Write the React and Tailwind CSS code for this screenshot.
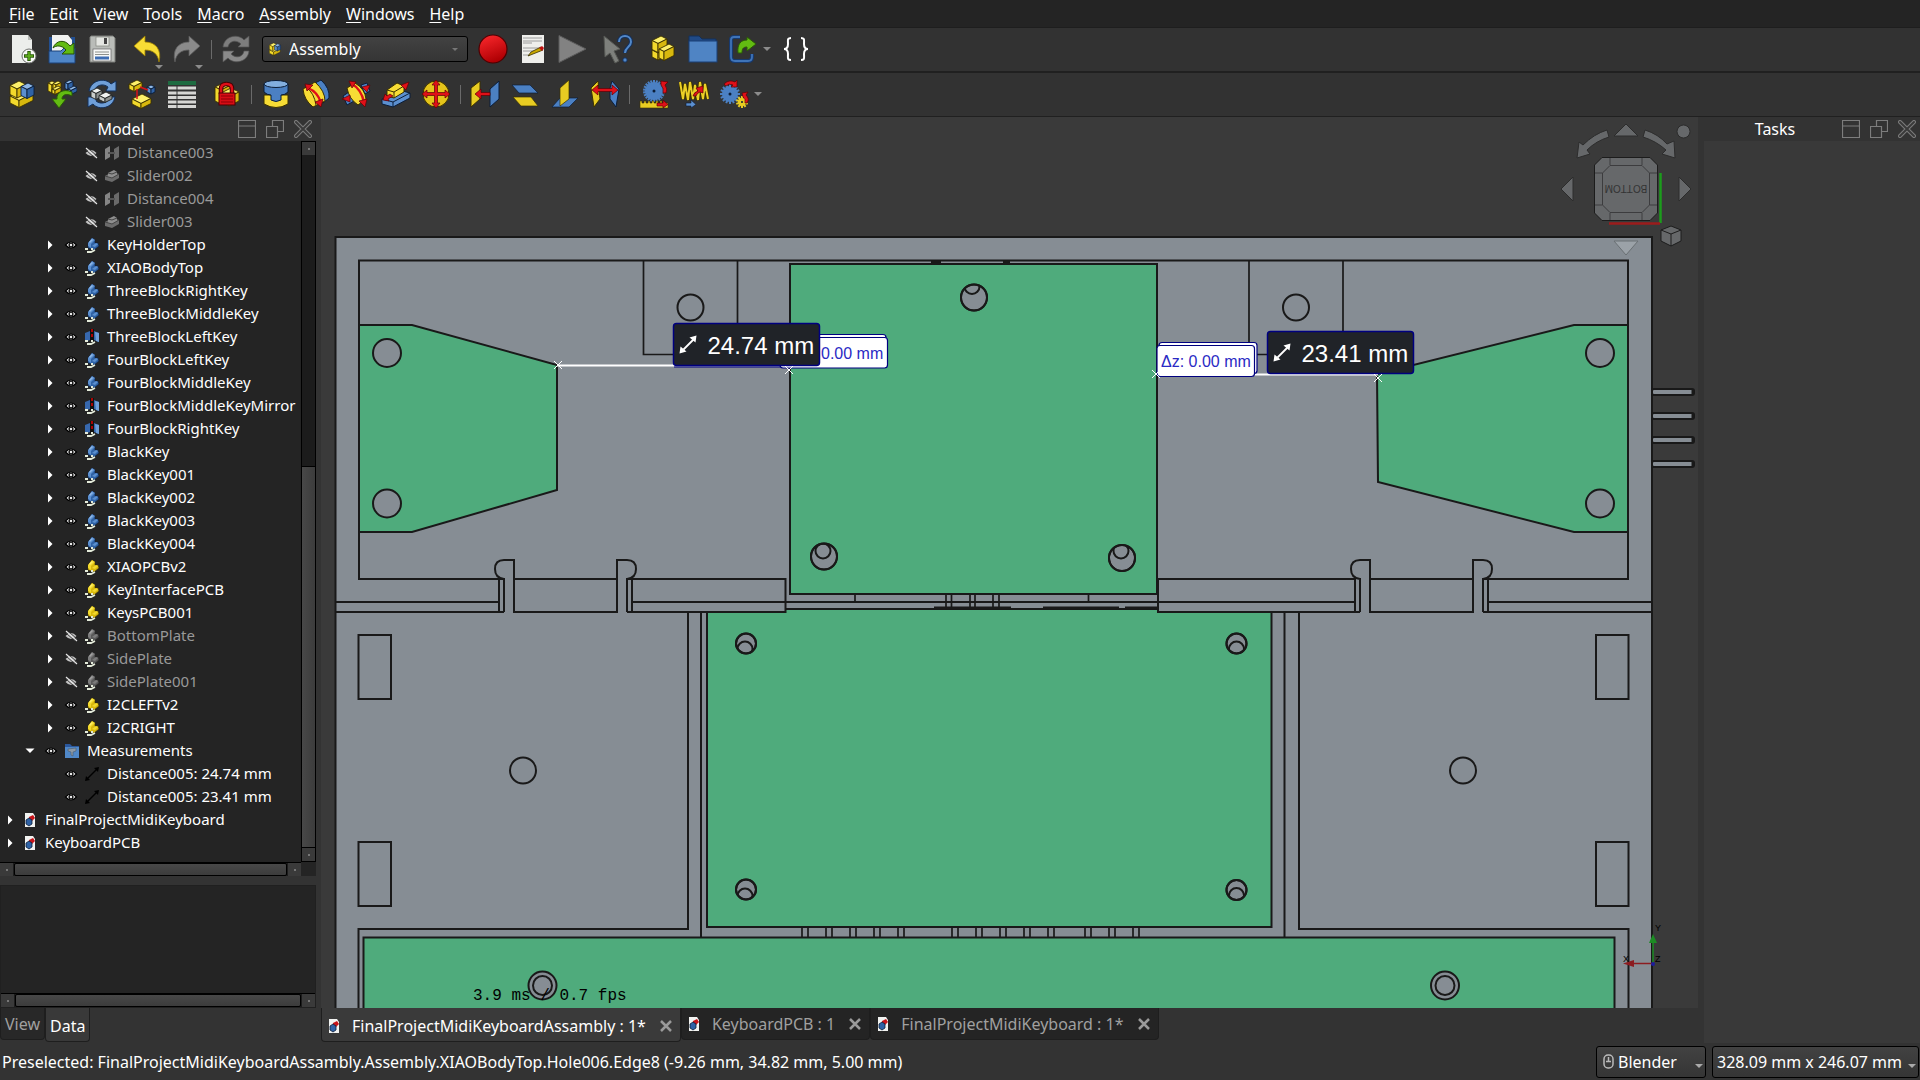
import React, { useState } from 'react';

/* ---------- icon helpers ---------- */

const YELLOW = { top: '#fdf06a', left: '#f2d92c', right: '#d8b80e', edge: '#3a3000' };
const BLUE = { top: '#8fb8e6', left: '#5b8fcf', right: '#2f62a5', edge: '#0b1d38' };
const GRAY = { top: '#a2a2a2', left: '#7c7c7c', right: '#5a5a5a', edge: '#2a2a2a' };
const SILVER = { top: '#f1f3f1', left: '#c9cdca', right: '#8d918f', edge: '#202424' };

// small isometric block, x/y is the top corner of the upper face
function Block({ x, y, a = 6, b = 6, h = 6, c = YELLOW }) {
  const A = [x - a, y + a / 2];
  const B = [x + b, y + b / 2];
  const C = [x + b - a, y + (a + b) / 2];
  return (
    <g stroke={c.edge} strokeWidth="0.9" strokeLinejoin="round">
      <path d={`M${x} ${y}L${B}L${C}L${A}Z`} fill={c.top} />
      <path d={`M${A}L${C}V${C[1] + h}L${A[0]} ${A[1] + h}Z`} fill={c.left} />
      <path d={`M${C}L${B}V${B[1] + h}L${C[0]} ${C[1] + h}Z`} fill={c.right} />
    </g>
  );
}

function Icon({ children, size = 30 }) {
  return (
    <svg viewBox={`0 0 ${size} ${size}`} width={size} height={size} className="shrink-0" aria-hidden="true">
      {children}
    </svg>
  );
}

function Gear({ x, y, r, n, fill, hole = 1 }) {
  const teeth = [];
  for (let i = 0; i < n; i++) {
    teeth.push(<rect key={i} x={x - 1} y={y - r - 2} width="2" height="4" fill={fill} transform={`rotate(${(360 / n) * i} ${x} ${y})`} />);
  }
  return (
    <g>
      {teeth}
      <circle cx={x} cy={y} r={r} fill={fill} />
      <circle cx={x} cy={y} r={hole} fill="#0b1d38" />
    </g>
  );
}

const red = { fill: '#e01018', stroke: '#5c0006', strokeWidth: 0.7, strokeLinejoin: 'round' };

const icons = {
  fresh: (
    <Icon>
      <path d="M5 1H21L25 6V29H5Z" fill="#eceeeb" />
      <path d="M21 1L25 6H21Z" fill="#b9bcb8" />
      <circle cx="22" cy="22" r="7" fill="#f7f7f7" stroke="#6d706c" />
      <path d="M22 17V27M17 22H27" stroke="#2c5c0c" strokeWidth="3.4" />
      <path d="M22 18V26M18 22H26" stroke="#62b41c" strokeWidth="1.6" />
    </Icon>
  ),
  open: (
    <Icon>
      <path d="M2 3H6V20H24V3H28V29H2Z" fill="#234f90" />
      <path d="M5 1H21L25 6V20H5Z" fill="#f2f3f1" />
      <path d="M2 17H14L17 14H28V29H2Z" fill="#4f86c8" stroke="#1b4179" />
      <path d="M6 14C9 6 18 5 23 12L27 9V20H15L19 16C15 11 9 11 6 14Z" fill="#62bb12" stroke="#245005" />
    </Icon>
  ),
  save: (
    <Icon>
      <path d="M4 2H26L28 4V28H3V3Z" fill="#b9bcb8" stroke="#7c7f7b" />
      <rect x="9" y="3" width="13" height="9" fill="#e4e6e2" stroke="#85877f" strokeWidth="0.7" />
      <rect x="17" y="4" width="3" height="6" fill="#444" />
      <rect x="6" y="15" width="18" height="12" fill="#f7f8f6" stroke="#666" strokeWidth="0.7" />
      <path d="M8 18H22M8 20.500H22" stroke="#8d908c" />
      <path d="M8 24H22" stroke="#3f6fb4" strokeWidth="3" />
    </Icon>
  ),
  undo: (
    <Icon>
      <path d="M2 12L13 2V8C24 8 30 16 27 28C26 20 21 16 13 16V22Z" fill="#f7dc35" stroke="#9a7d00" strokeWidth="0.8" strokeLinejoin="round" />
    </Icon>
  ),
  redo: (
    <Icon>
      <path d="M28 12L17 2V8C6 8 0 16 3 28C4 20 9 16 17 16V22Z" fill="#8a8a8a" stroke="#5a5a5a" strokeWidth="0.8" strokeLinejoin="round" />
    </Icon>
  ),
  refresh: (
    <Icon>
      <path d="M2 13C3 2 17 -1 23 6L28 2V13H17L20 10C15 5 8 7 7 13Z" fill="#7d7d7d" stroke="#555" strokeWidth="0.7" />
      <path d="M28 17C27 28 13 31 7 24L2 28V17H13L10 20C15 25 22 23 23 17Z" fill="#8a8a8a" stroke="#555" strokeWidth="0.7" />
    </Icon>
  ),
  record: (
    <Icon>
      <linearGradient id="rec" x1="0" y1="0" x2="0.4" y2="1">
        <stop offset="0" stopColor="#ff2a2e" />
        <stop offset="1" stopColor="#b00004" />
      </linearGradient>
      <circle cx="15" cy="15" r="14" fill="url(#rec)" stroke="#4d0002" strokeWidth="1.2" />
    </Icon>
  ),
  macroEdit: (
    <Icon>
      <rect x="4" y="1" width="22" height="28" fill="#efefec" />
      <path d="M5 4H24M5 7H24M5 9H14M5 14H24M5 17H22M5 21H12" stroke="#9c9c9c" />
      <path d="M10 22L13 18L23 13L25 16L15 20Z" fill="#c9a800" stroke="#3a3000" strokeWidth="0.8" />
      <path d="M21 14L24 12L26 14L24 17Z" fill="#c01010" />
    </Icon>
  ),
  play: (
    <Icon>
      <path d="M1 1.500L28 15L1 28.500Z" fill="#828282" stroke="#5c5c5c" />
    </Icon>
  ),
  whats: (
    <Icon>
      <path d="M1 2L2 23L7 19L12 29L16 27L11 17L17 15Z" fill="#7e807c" stroke="#565854" />
      <path d="M16 8C16 0 28 0 28 8C28 13 22 13 22 19" fill="none" stroke="#14305c" strokeWidth="4" />
      <path d="M16 8C16 0 28 0 28 8C28 13 22 13 22 19" fill="none" stroke="#5288c8" strokeWidth="2" />
      <circle cx="22" cy="26" r="2.200" fill="#5288c8" stroke="#14305c" />
    </Icon>
  ),
  part: (
    <Icon>
      <Block x={12} y={12} a={8} b={6} h={7} />
      <Block x={13} y={2} a={9} b={6} h={9} />
      <Block x={21} y={10} a={10} b={5} h={9} />
    </Icon>
  ),
  folder: (
    <Icon>
      <path d="M1 2H11L14 5H28V10H1Z" fill="#204a87" stroke="#12305c" />
      <rect x="1" y="7" width="28" height="21" fill="#4f84c4" stroke="#1a3f75" />
    </Icon>
  ),
  link: (
    <Icon>
      <path d="M12 3H6Q3 3 3 6V23Q3 27 7 27H20Q24 27 24 23V20" fill="none" stroke="#173a70" strokeWidth="4" />
      <path d="M12 3H6Q3 3 3 6V23Q3 27 7 27H20Q24 27 24 23V20" fill="none" stroke="#3f74b8" strokeWidth="1.800" />
      <path d="M10 19C9 10 13 6 19 6V3L28 10L19 17V13C15 13 14 15 14 19Z" fill="#62bb12" stroke="#2b5a06" />
    </Icon>
  ),
  braces: (
    <Icon>
      <path d="M10 4C6 4 7 6 7 10C7 13 6 15 3 15C6 15 7 17 7 20C7 24 6 26 10 26" fill="none" stroke="#fff" strokeWidth="2" />
      <path d="M20 4C24 4 23 6 23 10C23 13 24 15 27 15C24 15 23 17 23 20C23 24 24 26 20 26" fill="none" stroke="#fff" strokeWidth="2" />
    </Icon>
  ),
  assembly: (
    <Icon>
      <Block x={17} y={10} a={14} b={9} h={7} />
      <Block x={12} y={2} a={9} b={7} h={9} />
      <Block x={21} y={4} a={7} b={6} h={9} c={BLUE} />
    </Icon>
  ),
  insert: (
    <Icon>
      <Block x={5} y={2} a={4} b={4} h={8} />
      <Block x={11} y={2} a={5} b={3} h={5} />
      <Block x={11} y={7} a={6} b={3} h={4} />
      <Block x={23} y={1} a={5} b={3} h={6} c={BLUE} />
      <Block x={27} y={7} a={6} b={3} h={4} c={BLUE} />
      <path d="M25 13C16 9 9 14 10 20H5L12 29L19 20H15C15 16 19 14 25 17Z" fill="#62bb12" stroke="#2b5a06" />
    </Icon>
  ),
  solve: (
    <Icon>
      <path d="M2 12C4 1 18 -2 24 5L29 2V12H19L21 8C16 4 9 6 7 12Z" fill="#6f9fd8" stroke="#12305c" />
      <path d="M28 18C26 29 12 32 6 25L1 28V18H11L9 22C14 26 21 24 23 18Z" fill="#6f9fd8" stroke="#12305c" />
      <Block x={10} y={9} a={6} b={5} h={6} c={SILVER} />
      <Block x={19} y={13} a={7} b={6} h={4} c={SILVER} />
    </Icon>
  ),
  explode: (
    <Icon>
      <Block x={10} y={1} a={8} b={5} h={5} />
      <Block x={24} y={6} a={4} b={4} h={5} c={BLUE} />
      <Block x={15} y={15} a={10} b={9} h={5} />
      <path d="M13 8L21 11M10 10V20" stroke="#d8141a" strokeWidth="1.500" />
    </Icon>
  ),
  bom: (
    <Icon>
      <rect x="1" y="2" width="28" height="4" fill="#1e6b41" />
      <path d="M1 9H29M1 14H29M1 18.500H29M1 23H29M1 27.500H29" stroke="#d6d6d4" strokeWidth="3" />
      <path d="M10 7V29" stroke="#333" />
    </Icon>
  ),
  lock: (
    <Icon>
      <Block x={13} y={3} a={10} b={6} h={14} />
      <Block x={19} y={9} a={10} b={8} h={9} />
      <path d="M9 15V10Q9 5 14.500 5Q20 5 20 10V15" fill="none" stroke="#4a0004" strokeWidth="4.500" />
      <path d="M9 15V10Q9 5 14.500 5Q20 5 20 10V15" fill="none" stroke="#e01018" strokeWidth="2.500" />
      <rect x="7" y="14" width="16" height="12" fill="#d80d14" stroke="#4a0004" />
      <path d="M9 17H21M9 20H21M9 23H21" stroke="#8d0006" />
    </Icon>
  ),
  fixed: (
    <Icon>
      <path d="M3 16V25Q15 32 27 25V16Z" fill="#f7dc35" stroke="#3a3000" />
      <path d="M3 5V13Q6 16 10 16V21Q15 24 20 21V16Q24 16 27 13V5Z" fill="#4b80c3" stroke="#0b1d38" />
      <ellipse cx="15" cy="5" rx="12" ry="3.500" fill="#82aedf" stroke="#0b1d38" />
    </Icon>
  ),
  revolute: (
    <Icon>
      <path d="M14 4L20 1Q29 9 28 19L22 24Z" fill="#4b80c3" stroke="#0b1d38" />
      <path d="M2 10L14 3Q24 12 24 22L12 28Q3 21 2 10Z" fill="#f7dc35" stroke="#3a3000" />
      <path d="M6 9Q13 14 15 26" fill="none" stroke="#3a3000" />
      <path d="M7 9Q17 13 20 24" fill="none" stroke="#e01018" strokeWidth="2.400" />
      <path d="M4 5L12 6L6 12ZM14 23L22 20L20 28Z" {...red} />
    </Icon>
  ),
  cylindrical: (
    <Icon>
      <path d="M2 17L8 13L13 22L6 26ZM20 6L26 4L29 12L24 15Z" fill="#4b80c3" stroke="#0b1d38" />
      <path d="M6 9L14 4Q24 10 25 20L17 26Q8 20 6 9Z" fill="#f7dc35" stroke="#3a3000" />
      <path d="M11 5Q20 10 23 23" fill="none" stroke="#e01018" strokeWidth="2.400" />
      <path d="M8 2L15 3L11 9ZM18 22L26 20L24 28ZM1 20L9 16V23ZM21 8L29 6L26 13Z" {...red} />
    </Icon>
  ),
  slider: (
    <Icon>
      <path d="M1 20L18 11L29 14V19L12 28L1 25Z" fill="#5b8fcf" stroke="#0b1d38" />
      <path d="M1 20L12 23L29 14M12 23V28" fill="none" stroke="#0b1d38" />
      <path d="M6 11L16 4L23 7V13L13 19L6 17Z" fill="#f7dc35" stroke="#3a3000" />
      <path d="M6 11L13 13L23 7M13 13V19" fill="none" stroke="#3a3000" />
      <path d="M2 21L4 15L6 17L9 15L12 17L7 20L8 22ZM20 6L28 3L25 11Z" {...red} />
    </Icon>
  ),
  ball: (
    <Icon>
      <circle cx="15" cy="15" r="13" fill="#e5c41a" stroke="#3a3000" />
      <path d="M15 1L19 6H16.500V13.500H24V11L29 15L24 19V16.500H16.500V24H19L15 29L11 24H13.500V16.500H6V19L1 15L6 11V13.500H13.500V6H11Z" {...red} />
    </Icon>
  ),
  distance: (
    <Icon>
      <path d="M1 9L10 2V20L1 28Z" fill="#e8cc22" stroke="#3a3000" />
      <path d="M20 10L29 2V20L20 28Z" fill="#4b80c3" stroke="#0b1d38" />
      <path d="M5 15L11 10V13.500H20V16.500H11V20Z" {...red} />
    </Icon>
  ),
  parallel: (
    <Icon>
      <path d="M2 6H20L28 14H9Z" fill="#4b80c3" stroke="#0b1d38" strokeWidth="0.7" />
      <path d="M3 18H21L28 27H11Z" fill="#e8cc22" stroke="#3a3000" strokeWidth="0.7" />
    </Icon>
  ),
  perpendicular: (
    <Icon>
      <path d="M2 28L10 19H28L19 28Z" fill="#4b80c3" stroke="#0b1d38" strokeWidth="0.7" />
      <path d="M10 9L19 1V20L10 27Z" fill="#e8cc22" stroke="#3a3000" strokeWidth="0.7" />
    </Icon>
  ),
  angle: (
    <Icon>
      <path d="M1 9L8 2L10 20L4 28Z" fill="#e8cc22" stroke="#3a3000" />
      <path d="M20 9L22 2L29 10L26 28L20 20Z" fill="#4b80c3" stroke="#0b1d38" />
      <path d="M2 11L8 6V9.500H22V6L28 11L22 16V12.500H8V16Z" {...red} />
    </Icon>
  ),
  rack: (
    <Icon>
      <Gear x={15} y={12} r={9} n={22} fill="#4b80c3" hole={1.5} />
      <path d="M1 29V22H3V24H5V22H7V24H9V22H11V24H13V22H15V24H17V22H19V24H21V22H23V24H29V29Z" fill="#e8cc22" stroke="#3a3000" strokeWidth="0.6" />
      <path d="M18 24H24V21L29 25.500L24 29V27H18ZM22 2L29 3L26 6Q29 10 27 14H24Q25 9 22 6Z" {...red} />
    </Icon>
  ),
  screw: (
    <Icon>
      <path d="M1 3L4 20L6 5L9 21L11 3L14 20L16 6L19 21L21 3L24 20L26 5L29 20" fill="none" stroke="#3a3000" strokeWidth="4" />
      <path d="M1 3L4 20L6 5L9 21L11 3L14 20L16 6L19 21L21 3L24 20L26 5L29 20" fill="none" stroke="#ecd026" strokeWidth="2" />
      <path d="M14 17Q15 13 19 12L17 9L24 7V14L21 13Q18 14 17 17Z" {...red} />
      <path d="M7 24H12V21L17 25.500L12 29V27H7Z" fill="#5b8fcf" stroke="#0b1d38" strokeWidth="0.6" />
    </Icon>
  ),
  gears: (
    <Icon>
      <Gear x={11} y={15} r={8} n={16} fill="#4b80c3" hole={1.5} />
      <Gear x={23} y={23} r={4} n={10} fill="#e8cc22" />
      <path d="M5 5Q10 0 16 3L18 1V8H12L14 6Q10 4 7 7ZM23 14L29 13L27 16Q31 20 28 24H26Q27 20 24 18Z" {...red} />
    </Icon>
  ),
};

/* ---------- tree icons ---------- */

function Eye() {
  return (
    <Icon size={16}>
      <path d="M2.500 8Q8 2 13.500 8Q8 14 2.500 8Z" fill="#f4f4f4" stroke="#000" strokeWidth="1.200" />
      <circle cx="8" cy="8" r="2.600" fill="#111" />
      <circle cx="8" cy="8" r="1.200" fill="#eee" />
    </Icon>
  );
}

function EyeOff() {
  return (
    <Icon size={16}>
      <path d="M2.500 8Q8 2 13.500 8Q8 14 2.500 8Z" fill="#c4c4c4" />
      <path d="M3 5L12 13M6 4L14 11" stroke="#3a3a3a" />
      <path d="M3 3L14 13" stroke="#e6e6e6" strokeWidth="1.200" />
    </Icon>
  );
}

function Arrow({ open }) {
  return (
    <Icon size={16}>
      <path d={open ? 'M3.500 5.500H12.500L8 10Z' : 'M6 3.500L10.500 8L6 12.500Z'} fill="#fff" />
    </Icon>
  );
}

const bodyIcon = (c) => (
  <Icon size={16}>
    <path d="M4 6L8 1L11 3V6L14 6L15 9L10 13L4 11Z" fill={c.right} stroke={c.edge} strokeWidth="0.6" />
    <path d="M4 6L8 1L11 3L7 7V11L4 9Z" fill={c.left} />
    <path d="M8 9L12 6L14 7L11 10Z" fill={c.left} />
    <path d="M5 5L8 2L9 3L6 6Z" fill={c.top} />
    <path d="M1 12L4 12M3 15H7L11 13M7 12H9" stroke="#e3ead9" strokeWidth="1.800" />
  </Icon>
);

const treeIcons = {
  body: bodyIcon(BLUE),
  part: bodyIcon(YELLOW),
  off: bodyIcon(GRAY),
  mirror: (
    <Icon size={16}>
      <path d="M1 4L6 2V11L1 13ZM15 4L10 2V11L15 13Z" fill="#3768ae" />
      <path d="M11 3L15 4V13L12 12Z" fill="#6f9fd8" />
      <rect x="6" y="0" width="4" height="12" fill="#111" />
      <path d="M8 0V10" stroke="#d00" strokeWidth="1.500" strokeDasharray="3 2" />
      <path d="M1 12L4 12M3 15H7L11 13M7 12H9" stroke="#e3ead9" strokeWidth="1.800" />
    </Icon>
  ),
  distance: (
    <Icon size={16}>
      <path d="M1 4L6 1V12L1 15Z" fill="#858585" />
      <path d="M10 4L15 1V12L10 15Z" fill="#6a6a6a" />
      <path d="M4 8H11" stroke="#555" strokeWidth="2" />
    </Icon>
  ),
  slider: (
    <Icon size={16}>
      <path d="M1 8L8 4L15 6V10L8 14L1 12Z" fill="#6c6c6c" />
      <path d="M4 5L10 2L13 4V7L8 10L4 9Z" fill="#8f8f8f" />
      <path d="M1 8L8 10L15 6M4 5L8 6L13 4" fill="none" stroke="#444" />
    </Icon>
  ),
  group: (
    <Icon size={16}>
      <path d="M1 1H6L8 3H15V15H1Z" fill="#2a579c" />
      <rect x="1" y="4" width="14" height="11" fill="#5088c8" />
      <path d="M4 6L12 5V8L9 9V13L7 12V9L4 8Z" fill="#8c99a6" stroke="#4a5a6c" strokeWidth="0.6" />
    </Icon>
  ),
  measure: (
    <Icon size={16}>
      <path d="M3 13L13 3" stroke="#000" strokeWidth="1.500" />
      <path d="M15 1L14 6L10 2ZM1 15L2 10L6 14Z" fill="#000" />
    </Icon>
  ),
  doc: (
    <Icon size={16}>
      <path d="M3 1H11L13 4V15H3Z" fill="#f2f3f1" />
      <path d="M7 5L11 3L13 6L10 9L7 8Z" fill="#c8141a" />
      <path d="M4 8L7 6L10 8V12L7 14L4 12Z" fill="#2f62a5" stroke="#0b1d38" strokeWidth="0.8" />
    </Icon>
  ),
};

const treeRows = [
  { label: 'Distance003', icon: 'distance', depth: 3, hidden: true, leaf: true },
  { label: 'Slider002', icon: 'slider', depth: 3, hidden: true, leaf: true },
  { label: 'Distance004', icon: 'distance', depth: 3, hidden: true, leaf: true },
  { label: 'Slider003', icon: 'slider', depth: 3, hidden: true, leaf: true },
  { label: 'KeyHolderTop', icon: 'body', depth: 2 },
  { label: 'XIAOBodyTop', icon: 'body', depth: 2 },
  { label: 'ThreeBlockRightKey', icon: 'body', depth: 2 },
  { label: 'ThreeBlockMiddleKey', icon: 'body', depth: 2 },
  { label: 'ThreeBlockLeftKey', icon: 'mirror', depth: 2 },
  { label: 'FourBlockLeftKey', icon: 'body', depth: 2 },
  { label: 'FourBlockMiddleKey', icon: 'body', depth: 2 },
  { label: 'FourBlockMiddleKeyMirror', icon: 'mirror', depth: 2 },
  { label: 'FourBlockRightKey', icon: 'mirror', depth: 2 },
  { label: 'BlackKey', icon: 'body', depth: 2 },
  { label: 'BlackKey001', icon: 'body', depth: 2 },
  { label: 'BlackKey002', icon: 'body', depth: 2 },
  { label: 'BlackKey003', icon: 'body', depth: 2 },
  { label: 'BlackKey004', icon: 'body', depth: 2 },
  { label: 'XIAOPCBv2', icon: 'part', depth: 2 },
  { label: 'KeyInterfacePCB', icon: 'part', depth: 2 },
  { label: 'KeysPCB001', icon: 'part', depth: 2 },
  { label: 'BottomPlate', icon: 'off', depth: 2, hidden: true },
  { label: 'SidePlate', icon: 'off', depth: 2, hidden: true },
  { label: 'SidePlate001', icon: 'off', depth: 2, hidden: true },
  { label: 'I2CLEFTv2', icon: 'part', depth: 2 },
  { label: 'I2CRIGHT', icon: 'part', depth: 2 },
  { label: 'Measurements', icon: 'group', depth: 1, open: true },
  { label: 'Distance005: 24.74 mm', icon: 'measure', depth: 2, leaf: true },
  { label: 'Distance005: 23.41 mm', icon: 'measure', depth: 2, leaf: true },
  { label: 'FinalProjectMidiKeyboard', icon: 'doc', depth: 0, doc: true },
  { label: 'KeyboardPCB', icon: 'doc', depth: 0, doc: true },
];

const indent = ['pl-0', 'pl-5', 'pl-10', 'pl-15'];

/* ---------- bars ---------- */

const menus = ['File', 'Edit', 'View', 'Tools', 'Macro', 'Assembly', 'Windows', 'Help'];

function MenuBar() {
  return (
    <nav className="flex h-7 shrink-0 items-center gap-px border-b border-[#1e1e1e] bg-[#242424] pl-0.5">
      {menus.map((m) => (
        <button key={m} className="px-[7px] text-base leading-6">
          <span className="underline underline-offset-2">{m[0]}</span>{m.slice(1)}
        </button>
      ))}
    </nav>
  );
}

function Tool({ name, label, menu }) {
  return (
    <button aria-label={label} className="relative flex h-10 w-10 shrink-0 items-center justify-center">
      {icons[name]}
      {menu && <span className="absolute right-1 bottom-0 border-x-4 border-t-4 border-x-transparent border-t-[#8c8c8c]" />}
    </button>
  );
}

const Sep = () => <span className="mx-1 h-[19px] w-px shrink-0 bg-[#6a6a6a]" />;
const Drop = () => <span className="border-x-4 border-t-4 border-x-transparent border-t-[#8c8c8c]" />;

function Toolbars() {
  return (
    <>
      <div className="flex h-[45px] shrink-0 items-center border-b-2 border-[#202020] bg-[#323232] pb-px pl-0.5">
        <Tool name="fresh" label="New" />
        <Tool name="open" label="Open" />
        <Tool name="save" label="Save" />
        <span className="w-[5px]" />
        <Tool name="undo" label="Undo" menu />
        <Tool name="redo" label="Redo" menu />
        <Sep />
        <Tool name="refresh" label="Refresh" />
        <div className="relative mr-[5px] ml-1.5 flex w-[206px] items-center">
          <span className="pointer-events-none absolute left-1.5">
            <svg viewBox="0 0 30 30" width="14" height="14" aria-hidden="true">{icons.assembly.props.children}</svg>
          </span>
          <select aria-label="Workbench" className="h-[26px] w-full appearance-none rounded-[3px] border border-black bg-linear-to-b from-[#424242] to-[#353535] pl-[26px] text-base leading-6">
            <option>Assembly</option>
          </select>
          <span className="pointer-events-none absolute right-2.5 border-x-3 border-t-3 border-x-transparent border-t-[#777]" />
        </div>
        <Tool name="record" label="Record macro" />
        <Tool name="macroEdit" label="Macros" />
        <Tool name="play" label="Execute macro" />
        <span className="w-[5px]" />
        <Tool name="whats" label="What's this" />
        <span className="w-[5px]" />
        <Tool name="part" label="Create part" />
        <Tool name="folder" label="Create group" />
        <Tool name="link" label="Make link" />
        <Drop />
        <span className="w-[5px]" />
        <Tool name="braces" label="Expression" />
      </div>
      <div className="flex h-11 shrink-0 items-center border-b border-[#202020] bg-[#323232] pb-px pl-0.5">
        <Tool name="assembly" label="New assembly" />
        <Tool name="insert" label="Insert component" />
        <Tool name="solve" label="Solve" />
        <Tool name="explode" label="Exploded view" />
        <Tool name="bom" label="Bill of materials" />
        <span className="w-[5px]" />
        <Tool name="lock" label="Toggle grounded" />
        <Sep />
        <Tool name="fixed" label="Fixed joint" />
        <Tool name="revolute" label="Revolute joint" />
        <Tool name="cylindrical" label="Cylindrical joint" />
        <Tool name="slider" label="Slider joint" />
        <Tool name="ball" label="Ball joint" />
        <Sep />
        <Tool name="distance" label="Distance joint" />
        <Tool name="parallel" label="Parallel joint" />
        <Tool name="perpendicular" label="Perpendicular joint" />
        <Tool name="angle" label="Angle joint" />
        <Sep />
        <Tool name="rack" label="Rack and pinion joint" />
        <Tool name="screw" label="Screw joint" />
        <Tool name="gears" label="Gear joint" />
        <Drop />
      </div>
    </>
  );
}

/* ---------- docks ---------- */

function DockTitle({ title }) {
  const btn = 'flex h-6 w-[26px] items-center justify-center';
  return (
    <div className="flex h-6 shrink-0 items-center gap-0.5">
      <h2 className="flex-1 pl-2.5 text-center text-base leading-6">{title}</h2>
      <button aria-label={`${title} shade`} className={btn}>
        <svg width="18" height="18" viewBox="0 0 18 18" fill="none" stroke="#7d7d7d" strokeWidth="1.200"><path d="M0.500 0.500H17.500V17.500H0.500ZM1 6H17" /></svg>
      </button>
      <button aria-label={`${title} float`} className={btn}>
        <svg width="18" height="18" viewBox="0 0 18 18" fill="none" stroke="#7d7d7d" strokeWidth="1.200"><path d="M6.500 6.500V0.500H17.500V11.500H11.500M0.500 6.500H11.500V17.500H0.500Z" /></svg>
      </button>
      <button aria-label={`${title} close`} className={btn}>
        <svg width="18" height="18" viewBox="0 0 18 18"><path d="M2 2L16 16M16 2L2 16" stroke="#7d7d7d" strokeWidth="4" strokeLinecap="round" /><path d="M2 2L16 16M16 2L2 16" stroke="#3a3a3a" strokeWidth="2" strokeLinecap="round" /></svg>
      </button>
    </div>
  );
}

function ScrollButton() {
  return (
    <span className="flex h-[13px] w-[13px] shrink-0 items-center justify-center bg-[#3a3a3a]">
      <span className="h-0.5 w-0.5 bg-[#777]" />
    </span>
  );
}

function HScroll() {
  return (
    <div className="flex h-3.5 shrink-0 gap-px border-t border-black bg-[#1c1c1c]">
      <ScrollButton />
      <div className="flex-1 rounded-xs border border-black bg-linear-to-b from-[#484848] to-[#3c3c3c]" />
      <ScrollButton />
    </div>
  );
}

function TreeRow({ row }) {
  return (
    <li className={`flex h-[23px] items-center ${indent[row.depth]} ${row.hidden ? 'text-[#999]' : 'text-white'}`}>
      <span className="flex w-5 shrink-0 justify-center">{!row.leaf && <Arrow open={row.open} />}</span>
      {!row.doc && <span className="flex w-[22px] shrink-0 justify-center">{row.hidden ? <EyeOff /> : <Eye />}</span>}
      <span className="flex w-5 shrink-0 justify-center">{treeIcons[row.icon]}</span>
      <span className="ml-[5px] text-[15px] leading-[23px] whitespace-nowrap">{row.label}</span>
    </li>
  );
}

function ModelDock() {
  return (
    <aside className="flex w-[321px] shrink-0 flex-col bg-[#333] pr-[5px]">
      <DockTitle title="Model" />
      <div className="flex min-h-0 flex-1 bg-[#242424]">
        <div className="flex min-w-0 flex-1 flex-col">
          <ul className="min-h-0 flex-1 overflow-hidden">
            {treeRows.map((row, i) => <TreeRow key={i} row={row} />)}
          </ul>
          <HScroll />
        </div>
        <div className="mb-3.5 flex w-[15px] shrink-0 flex-col border border-black bg-[#1c1c1c]">
          <ScrollButton />
          <div className="flex-1" />
          <div className="h-[382px] border-y border-black bg-linear-to-r from-[#484848] to-[#3c3c3c]" />
          <ScrollButton />
        </div>
      </div>
      <div className="mt-[9px] flex h-[123px] shrink-0 flex-col border border-[#202020] bg-[#242424]">
        <div className="flex-1" />
        <HScroll />
      </div>
      <div className="flex h-[35px] shrink-0 items-start">
        <button className="h-8 rounded-b border border-t-0 border-[#1e1e1e] bg-[#282828] px-1 text-base leading-6 text-[#a0a0a0]">View</button>
        <button className="h-[34px] rounded-b border border-t-0 border-[#1e1e1e] bg-[#393939] px-1 pt-0.5 text-base leading-6">Data</button>
      </div>
    </aside>
  );
}

/* ---------- 3D view ---------- */

const LINE = '#191919';
const STEEL = '#868d94';
const BOARD = '#4fab7c';

const comb = [802, 808, 826, 832, 850, 856, 874, 880, 898, 904, 952, 958, 976, 982, 1000, 1006, 1024, 1030, 1048, 1054, 1085, 1091, 1109, 1115, 1133, 1139];

// screw hole with a second, offset bore visible through it
function Hole({ id, x, y, r, dx, dy, r2 }) {
  return (
    <g>
      <clipPath id={id}><circle cx={x} cy={y} r={r} /></clipPath>
      <circle cx={x} cy={y} r={r} fill={STEEL} />
      <circle cx={x + dx} cy={y + dy} r={r2} clipPath={`url(#${id})`} />
      <circle cx={x} cy={y} r={r} />
    </g>
  );
}

// hooked slot pair on the dividing wall, x is the left hook's post
function Hooks({ x }) {
  return (
    <g>
      <path fill={STEEL} stroke="none" d={`M${x} 577H${x + 10}V613H${x}ZM${x + 113} 577H${x + 122}V613H${x + 113}Z`} />
      <path d={`M${x} 612V579Q${x - 9} 578 ${x - 9} 569Q${x - 9} 560 ${x} 560H${x + 10}V612H${x + 113}V560H${x + 123}Q${x + 132} 560 ${x + 132} 569Q${x + 132} 578 ${x + 123} 579V612`} />
      <path d={`M${x - 5} 578V612M${x + 128} 578V612M${x + 10} 579H${x + 113}`} />
    </g>
  );
}

function Cross({ x, y }) {
  return <path d={`M${x - 4} ${y - 4}L${x + 4} ${y + 4}M${x + 4} ${y - 4}L${x - 4} ${y + 4}`} stroke="#fff" strokeWidth="1" />;
}

function Measure({ x, y, value }) {
  return (
    <g>
      <rect x={x} y={y} width="146" height="42" rx="3" fill="#202328" stroke="#00007f" strokeWidth="1.5" />
      <path d={`M${x + 10} ${y + 26}L${x + 20} ${y + 16}`} stroke="#fff" strokeWidth="1.800" />
      <path d={`M${x + 23} ${y + 12}L${x + 22} ${y + 19}L${x + 16} ${y + 14}ZM${x + 6} ${y + 30}L${x + 7} ${y + 23}L${x + 13} ${y + 28}Z`} fill="#fff" />
      <text x={x + 34} y={y + 30} fontSize="24" fill="#fff">{value}</text>
    </g>
  );
}

function NavCube() {
  return (
    <g fill="#66686a" stroke="#2c2c2c" strokeWidth="1">
      <path d="M1626 124L1638 136H1614ZM1561 189L1573 177V201ZM1691 189L1679 177V201Z" />
      <path d="M1614 241H1638L1626 255Z" fill="#9ba2a8" stroke="#6a7074" />
      <circle cx="1683.500" cy="131.500" r="6.500" />
      <path d="M1607 130Q1594 134 1583 145L1579 142L1577 158L1590 154L1587 150Q1596 141 1609 137Z" />
      <path d="M1645 130Q1658 134 1667 144L1674 141L1675 158L1662 154L1666 150Q1656 141 1643 137Z" />
      <path d="M1602 157.500H1650L1657.500 165V213L1650 220.500H1602L1594.500 213V165Z" stroke="#1c1c1c" />
      <path d="M1610 165.500H1642L1649.500 173V205L1642 212.500H1610L1602.500 205V173ZM1610 158V165M1642 158V165M1610 213V220M1642 213V220M1595 173H1602M1650 173H1657M1595 205H1602M1650 205H1657" fill="none" stroke="#3c3c3e" />
      <text x="1626" y="193" textAnchor="middle" fontSize="10" fill="#333" stroke="none" transform="rotate(180 1626 189)">BOTTOM</text>
      <path d="M1660.500 173V223" stroke="#1c9c1c" strokeWidth="2.500" />
      <path d="M1609 223.500H1660" stroke="#9c1c1c" strokeWidth="2.500" />
      <path d="M1671 226L1681 230V241L1671 246L1661 241V230Z" stroke="#1c1c1c" />
      <path d="M1661 230L1671 234L1681 230M1671 234V246" fill="none" stroke="#1c1c1c" />
    </g>
  );
}

function Viewport() {
  return (
    <svg viewBox="321 117 1377 891" preserveAspectRatio="xMinYMin slice" className="min-h-0 w-full flex-1 bg-[#3a3a3a]" fontFamily="'Liberation Sans', Arial, sans-serif" role="img" aria-label="3D view">
      <g fill="none" stroke={LINE} strokeWidth="2">
        <rect x="335.500" y="237" width="1316.500" height="800" fill={STEEL} />
        {[392, 416, 440, 464].map((y) => (
          <g key={y}>
            <rect x="1652" y={y - 3} width="42" height="6" rx="2" fill={STEEL} />
            <path d={`M1693 ${y - 2}V${y + 2}`} strokeWidth="3" />
          </g>
        ))}
        <path d="M504 579H359V260.500H1628V579H1479M785.500 579H627M1158 579H1356" />
        <path d="M643.500 261V354.500H737.500V261M1249 261V354.500H1343V261" strokeWidth="1.700" />
        <circle cx="690.500" cy="307.500" r="13" />
        <circle cx="1296" cy="307.500" r="13" />

        {/* side boards */}
        <path d="M359 325H412L557 365V490L412 532H359ZM1628 325H1574L1377 374L1378 482L1574 532H1628Z" fill={BOARD} />
        {[[387, 353], [387, 503.5], [1600, 353], [1600, 503.5]].map(([x, y]) => (
          <circle key={`${x}-${y}`} cx={x} cy={y} r="14" fill={STEEL} />
        ))}

        {/* middle board */}
        <rect x="707" y="609" width="564.500" height="318" fill={BOARD} />
        <rect x="701" y="579" width="84.500" height="33" fill={STEEL} stroke="none" />
        <rect x="1158" y="579" width="120" height="33" fill={STEEL} stroke="none" />
        <path d="M627 579H785.500V612H627M1356 579H1158V612H1360M336 602H499M632 602H1355M1488 602H1652M336 612H504M1483 612H1652" />
        <Hooks x={504} />
        <Hooks x={1360} />
        <path d="M688 612V929H358.500V1010M701 612V937M1284.500 612V937M1299 612V929H1628.500V1010" />
        <Hole id="m1" x={746} y={643.5} r={10} dx={-1} dy={5.5} r2={7.5} />
        <Hole id="m2" x={746} y={889.5} r={10} dx={-1} dy={6.5} r2={7.5} />
        <Hole id="m3" x={1236.5} y={643.5} r={10} dx={0} dy={5.5} r2={7.5} />
        <Hole id="m4" x={1236.5} y={890} r={10} dx={0} dy={5.5} r2={7.5} />

        {/* top board */}
        <path d="M855 594V602M946 594V608M951.500 594V608M970 594V608M975 594V608M993 594V608M999 594V608M1088.500 594V602" strokeWidth="1.700" />
        <path d="M934 608H1011M1043 608H1119M1125 608H1157M931 262H941M1003 262H1010" strokeWidth="3" />
        <rect x="790" y="264" width="367" height="330" fill={BOARD} />
        <Hole id="t1" x={974} y={297.5} r={13} dx={-2} dy={-11} r2={7.5} />
        <Hole id="t2" x={824} y={556.5} r={13} dx={-1} dy={-5.5} r2={7.5} />
        <Hole id="t3" x={1122} y={558} r={13} dx={-1} dy={-7} r2={7.5} />

        {/* bottom board */}
        <rect x="363.500" y="937.500" width="1251" height="90" fill={BOARD} />
        {comb.map((x) => <path key={x} d={`M${x} 928V937`} strokeWidth="1.700" />)}
        {[542.5, 1445].map((x) => (
          <g key={x}>
            <circle cx={x} cy="985.500" r="14" fill={STEEL} />
            <circle cx={x} cy="985.500" r="9.500" />
          </g>
        ))}

        {[[358.5, 635], [358.5, 842], [1596, 635], [1596, 842]].map(([x, y]) => (
          <rect key={`${x}-${y}`} x={x} y={y} width="32.500" height="64" />
        ))}
        <circle cx="523" cy="770.500" r="13" />
        <circle cx="1463" cy="770.500" r="13" />
      </g>

      {/* measurements */}
      <path d="M557 365.500H790M1157 374.500H1378" stroke="#fff" strokeWidth="2" />
      <g fill="#fff" stroke="#00007f" strokeWidth="1.200">
        <rect x="780" y="334.500" width="106" height="31" rx="3" />
        <rect x="780" y="337.500" width="107.500" height="30.500" rx="3" />
        <path d="M674 367H780" />
        <rect x="1159" y="342.500" width="98" height="31" rx="3" />
        <rect x="1157" y="345.500" width="97.500" height="31" rx="3" />
      </g>
      <text x="821" y="359" fontSize="16" fill="#2a2ac4">0.00 mm</text>
      <text x="1161" y="367" fontSize="16" fill="#2a2ac4">Δz: 0.00 mm</text>
      <Measure x={673.5} y={323.5} value="24.74 mm" />
      <Measure x={1267.5} y={331.5} value="23.41 mm" />
      <Cross x={558} y={365} />
      <Cross x={789} y={370} />
      <Cross x={1156} y={374} />
      <Cross x={1378} y={378} />

      <NavCube />

      {/* axis cross */}
      <path d="M1653 963V940" stroke="#1c8c24" strokeWidth="1.500" />
      <path d="M1653 934L1657 943H1649Z" fill="#1c8c24" />
      <path d="M1653 963.500H1630" stroke="#8c1c20" strokeWidth="1.500" />
      <path d="M1623 963.500L1634 960V967Z" fill="#8c1c20" />
      <circle cx="1653" cy="964" r="2" fill="#1c1c9c" />
      <g fontSize="9" fill="#000">
        <text x="1623" y="962">X</text>
        <text x="1655" y="931">Y</text>
        <text x="1655" y="962">Z</text>
      </g>
      <text x="473" y="1000" fontSize="16" fill="#000" fontFamily="'Liberation Mono', monospace">3.9 ms / 0.7 fps</text>
    </svg>
  );
}

const docs = ['FinalProjectMidiKeyboardAssambly : 1*', 'KeyboardPCB : 1', 'FinalProjectMidiKeyboard : 1*'];

function DocTabs() {
  const [active, setActive] = useState(0);
  return (
    <div className="flex h-[35px] shrink-0 items-start bg-[#333]">
      {docs.map((d, i) => (
        <div key={d} className={`flex items-center rounded-b border border-t-0 border-[#1e1e1e] pr-1.5 pl-1 ${i === active ? 'h-[34px] bg-[#3a3a3a] pt-0.5 text-white' : 'h-8 bg-[#242424] text-[#a0a0a0]'}`}>
          <button onClick={() => setActive(i)} className="flex items-center gap-2.5 text-base leading-6 whitespace-nowrap">
            {treeIcons.doc}
            {d}
          </button>
          <button aria-label={`Close ${d}`} className="ml-3 flex h-6 w-4 items-center justify-center">
            <svg width="12" height="12" viewBox="0 0 12 12"><path d="M1 1L11 11M11 1L1 11" stroke="#9a9a9a" strokeWidth="2.500" /></svg>
          </button>
        </div>
      ))}
    </div>
  );
}

function StatusBar() {
  const box = 'flex h-8 items-center rounded-[3px] border border-black bg-linear-to-b from-[#424242] to-[#353535] text-base leading-6';
  return (
    <footer className="flex h-[37px] shrink-0 items-center gap-1.5 bg-[#333] pr-px pl-0.5">
      <p className="flex-1 text-base leading-6">Preselected: FinalProjectMidiKeyboardAssambly.Assembly.XIAOBodyTop.Hole006.Edge8 (-9.26 mm, 34.82 mm, 5.00 mm)</p>
      <button className={`${box} w-[110px] pl-1.5`}>
        <svg width="11" height="15" viewBox="0 0 11 15" fill="none" stroke="#bbb" strokeWidth="1.500"><rect x="1" y="1" width="9" height="13" rx="4" /><path d="M5.500 3V7M3 7.500H8" /></svg>
        <span className="ml-1 flex-1 text-left">Blender</span>
        <span className="mt-2 mr-0.5 border-x-4 border-t-4 border-x-transparent border-t-[#aaa]" />
      </button>
      <button className={`${box} w-[207px] pl-1`}>
        <span className="flex-1 text-left whitespace-nowrap">328.09 mm x 246.07 mm</span>
        <span className="mt-2 mr-0.5 border-x-4 border-t-4 border-x-transparent border-t-[#aaa]" />
      </button>
    </footer>
  );
}

export default function App() {
  return (
    <div className="flex h-screen flex-col overflow-hidden bg-[#333] font-['Noto_Sans',sans-serif] text-white">
      <MenuBar />
      <Toolbars />
      <div className="flex min-h-0 flex-1">
        <ModelDock />
        <main className="flex min-w-0 flex-1 flex-col">
          <Viewport />
          <DocTabs />
        </main>
        <aside className="ml-1.5 flex w-[216px] shrink-0 flex-col">
          <DockTitle title="Tasks" />
          <div className="flex-1 bg-[#393939]" />
        </aside>
      </div>
      <StatusBar />
    </div>
  );
}
